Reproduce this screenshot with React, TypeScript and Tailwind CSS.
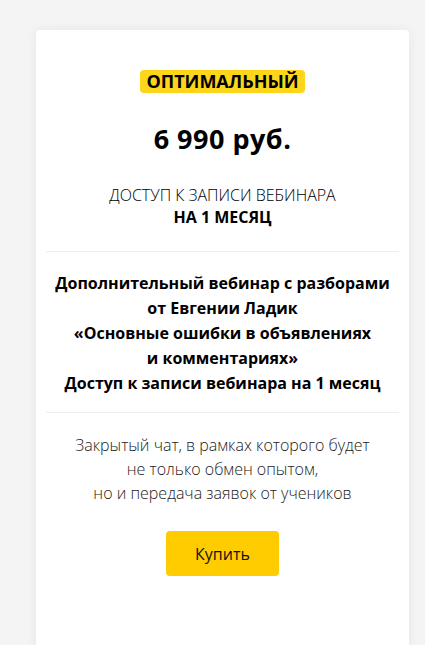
export default function App() {
  return (
    <div
      className="min-h-[645px] bg-[#f4f4f4] pt-[30px] pl-[36px] pr-[16px]"
      style={{ fontFamily: '"Open Sans", "Noto Sans", sans-serif' }}
    >
      <div className="bg-white rounded-[4px] shadow-[0_0_12px_rgba(0,0,0,0.06)] px-[10px] pt-[40px] pb-[80px] text-center text-black">
        <div className="flex justify-center">
          <span className="bg-[#fdd51b] rounded-[4px] px-[6px] text-[18px] leading-[23px] font-bold uppercase">
            Оптимальный
          </span>
        </div>

        <div className="mt-[28px] text-[27px] leading-[36px] font-bold tracking-[0.5px]">6 990 руб.</div>

        <div className="mt-[27px] text-[16px] leading-[22px]">
          <p className="font-light uppercase">Доступ к записи вебинара</p>
          <p className="font-bold uppercase">На 1 месяц</p>
        </div>

        <div className="mt-[23px] border-t border-[#eeeeee]" />

        <div className="pt-[19px] pb-[16px] text-[16px] leading-[25px] font-bold">
          <p>Дополнительный вебинар с разборами</p>
          <p>от Евгении Ладик</p>
          <p>«Основные ошибки в объявлениях</p>
          <p>и комментариях»</p>
          <p>Доступ к записи вебинара на 1 месяц</p>
        </div>

        <div className="border-t border-[#eeeeee]" />

        <div className="pt-[20px] text-[16px] leading-[24px] font-light text-[#222]">
          <p>Закрытый чат, в рамках которого будет</p>
          <p>не только обмен опытом,</p>
          <p>но и передача заявок от учеников</p>
        </div>

        <div className="mt-[26px] flex justify-center">
          <button className="w-[113px] h-[45px] bg-[#ffcc00] rounded-[4px] text-[16px] text-[#111]">
            Купить
          </button>
        </div>
      </div>
    </div>
  );
}
